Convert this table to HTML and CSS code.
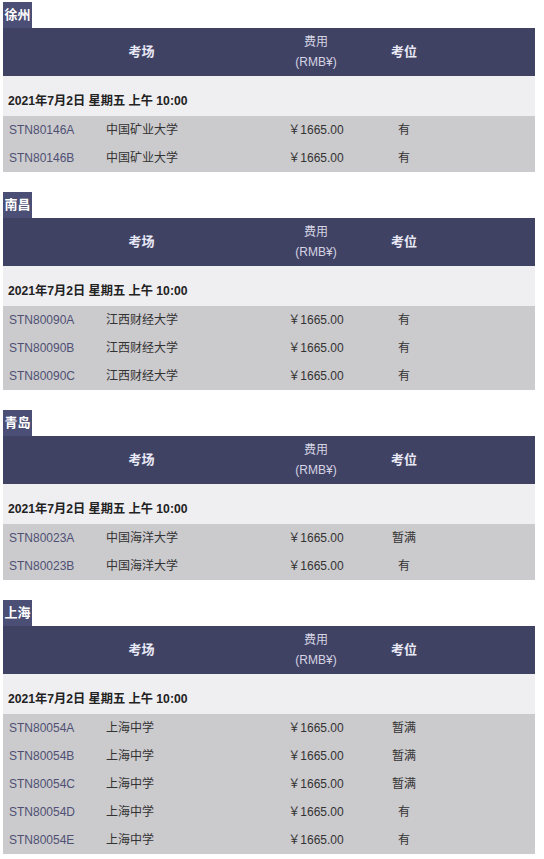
FILE: index.html
```html
<!DOCTYPE html>
<html lang="zh-CN">
<head>
    <meta charset="UTF-8">
    <meta name="viewport" content="width=device-width, initial-scale=1.0">
    <title>考场信息</title>
    <link rel="stylesheet" href="styles.css">
</head>
<body>
    <div class="page" id="page"></div>

    <script>
        // Exam centre data per city
        const cities = [
            { name: "徐州", school: "中国矿业大学", rows: [
                { code: "STN80146A", seat: "有" },
                { code: "STN80146B", seat: "有" }
            ]},
            { name: "南昌", school: "江西财经大学", rows: [
                { code: "STN80090A", seat: "有" },
                { code: "STN80090B", seat: "有" },
                { code: "STN80090C", seat: "有" }
            ]},
            { name: "青岛", school: "中国海洋大学", rows: [
                { code: "STN80023A", seat: "暂满" },
                { code: "STN80023B", seat: "有" }
            ]},
            { name: "上海", school: "上海中学", rows: [
                { code: "STN80054A", seat: "暂满" },
                { code: "STN80054B", seat: "暂满" },
                { code: "STN80054C", seat: "暂满" },
                { code: "STN80054D", seat: "有" },
                { code: "STN80054E", seat: "有" }
            ]}
        ];

        function renderCity(city) {
            let rows = '';
            city.rows.forEach(r => {
                rows += `
                    <tr class="exam-row">
                        <td class="code">${r.code}</td>
                        <td class="school">${city.school}</td>
                        <td class="price">￥1665.00</td>
                        <td class="seat">${r.seat}</td>
                        <td></td>
                    </tr>`;
            });
            return `
                <div class="city">
                    <span class="city-label">${city.name}</span>
                    <table class="exam-table">
                        <colgroup>
                            <col class="c-code"><col class="c-school"><col class="c-price"><col class="c-seat"><col>
                        </colgroup>
                        <thead>
                            <tr>
                                <th colspan="2">考场</th>
                                <th class="fee">费用<br>(RMB¥)</th>
                                <th>考位</th>
                                <th></th>
                            </tr>
                        </thead>
                        <tbody>
                            <tr class="date-row"><td colspan="5">2021年7月2日 星期五 上午 10:00</td></tr>
                            ${rows}
                        </tbody>
                    </table>
                </div>`;
        }

        document.getElementById('page').innerHTML = cities.map(renderCity).join('');
    </script>
</body>
</html>
```

FILE: styles.css
```css
body, html {
    margin: 0;
    padding: 0;
    background-color: #ffffff;
    font-family: "Liberation Sans", "Noto Sans CJK SC", sans-serif;
    color: #333333;
}
.page {
    padding: 2px 9px 0 3px;
}
.city {
    margin-bottom: 20px;
}
.city-label {
    display: block;
    width: 29px;
    height: 26px;
    box-sizing: border-box;
    padding-top: 4px;
    background-color: #4b4e75;
    color: #ffffff;
    font-size: 13px;
    font-weight: bold;
    line-height: 18px;
    text-align: center;
}
.exam-table {
    width: 532px;
    border-collapse: collapse;
    table-layout: fixed;
    font-size: 12px;
}
.c-code { width: 97px; }
.c-school { width: 180px; }
.c-price { width: 72px; }
.c-seat { width: 104px; }
.exam-table th {
    height: 48px;
    padding: 0;
    background-color: #404263;
    color: #e9e9f7;
    font-size: 13px;
    font-weight: bold;
    line-height: 18px;
    text-align: center;
    vertical-align: middle;
}
.exam-table th.fee {
    font-weight: normal;
    font-size: 12px;
    line-height: 20px;
    color: #d4d4e4;
}
.date-row td {
    height: 40px;
    box-sizing: border-box;
    padding: 16px 5px 6px;
    background-color: #efeef1;
    color: #222222;
    font-size: 12.2px;
    font-weight: bold;
    line-height: 18px;
}
.exam-row td {
    height: 28px;
    box-sizing: border-box;
    padding: 0 6px;
    background-color: #cbcacd;
    line-height: 18px;
    vertical-align: middle;
}
.code { color: #4f5174; }
.school { color: #333333; }
.price, .seat {
    text-align: center;
    color: #333333;
}
.exam-row td.price, .exam-row td.seat {
    padding: 0;
}
```
